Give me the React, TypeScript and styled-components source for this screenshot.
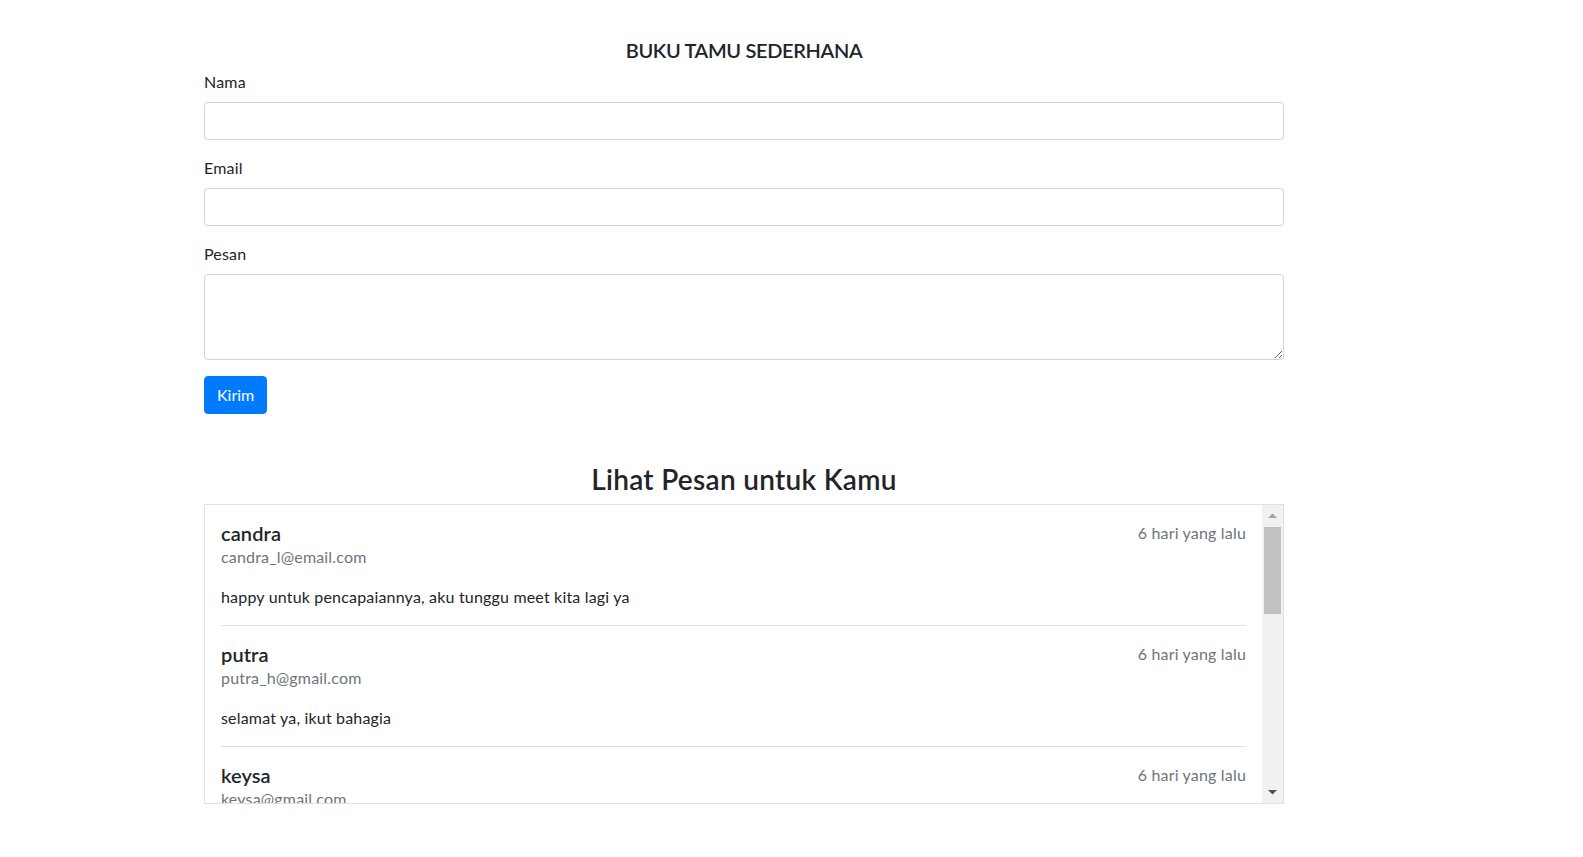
import React from "react";
import styled, { createGlobalStyle } from "styled-components";

const GlobalStyle = createGlobalStyle`
  * { box-sizing: border-box; }
  body {
    margin: 0;
    background: #fff;
    color: #212529;
    font-family: Lato, "Open Sans", "Noto Sans", sans-serif;
    font-size: 16px;
    line-height: 1.5;
    letter-spacing: 0.18px;
  }
`;

const Page = styled.div`
  width: 1080px;
  margin-left: 204px;
  padding-top: 38px;
`;

const Title = styled.h5`
  margin: 0 0 8px;
  font-size: 20px;
  font-weight: 600;
  line-height: 24px;
  text-align: center;
  letter-spacing: -0.35px;
`;

const Form = styled.form`
  display: flex;
  flex-direction: column;
  align-items: stretch;
`;

const Group = styled.div`
  display: flex;
  flex-direction: column;
  margin-bottom: 16px;
`;

const Label = styled.label`
  display: block;
  margin-bottom: 8px;
  line-height: 24px;
  font-size: 16px;
`;

const Input = styled.input`
  display: block;
  width: 100%;
  height: 38px;
  padding: 6px 12px;
  font: inherit;
  border: 1px solid #ced4da;
  border-radius: 4px;
  background: #fff;
  outline: none;
`;

const TextArea = styled.textarea`
  display: block;
  width: 100%;
  height: 86px;
  padding: 6px 12px;
  font: inherit;
  border: 1px solid #ced4da;
  border-radius: 4px;
  background: #fff;
  outline: none;
  resize: vertical;
`;

const Button = styled.button`
  align-self: flex-start;
  height: 38px;
  padding: 6px 12px;
  font: inherit;
  font-size: 16px;
  line-height: 24px;
  color: #fff;
  background: #007bff;
  border: 1px solid #007bff;
  border-radius: 4px;
  cursor: pointer;
`;

const Heading = styled.h3`
  margin: 49px 0 7px;
  font-size: 28px;
  font-weight: 600;
  line-height: 33.6px;
  text-align: center;
  letter-spacing: 0.3px;
`;

const ListBox = styled.div`
  display: flex;
  height: 300px;
  border: 1px solid #dee2e6;
`;

const ListContent = styled.div`
  flex: 1;
  min-width: 0;
  overflow: hidden;
  padding: 0 16px;
`;

const ScrollBar = styled.div`
  width: 21px;
  flex: none;
  display: flex;
  flex-direction: column;
  background: #f1f1f1;
`;

const ArrowButton = styled.div`
  height: 21px;
  flex: none;
  display: flex;
  align-items: center;
  justify-content: center;
`;

const Arrow = styled.svg<{ $dark?: boolean }>`
  width: 9px;
  height: 5px;
  fill: ${(p) => (p.$dark ? "#505050" : "#a3a3a3")};
`;

const Track = styled.div`
  flex: 1;
  padding: 1px 2px;
`;

const Thumb = styled.div`
  height: 87px;
  background: #c1c1c1;
`;

const Item = styled.div`
  padding: 16px 0 16px;
  border-bottom: 1px solid #dee2e6;
`;

const Row = styled.div`
  display: flex;
  justify-content: space-between;
  align-items: flex-start;
`;

const Name = styled.h5`
  margin: 0;
  font-size: 20px;
  font-weight: 600;
  line-height: 24px;
  letter-spacing: 0.1px;
`;

const Time = styled.span`
  color: #6c757d;
  font-size: 16px;
  line-height: 24px;
`;

const Email = styled.div`
  color: #6c757d;
  font-size: 16px;
  line-height: 24px;
  margin-bottom: 16px;
`;

const Message = styled.p`
  margin: 0;
  font-size: 16px;
  line-height: 24px;
`;

const messages = [
  { name: "candra", email: "candra_l@email.com", text: "happy untuk pencapaiannya, aku tunggu meet kita lagi ya" },
  { name: "putra", email: "putra_h@gmail.com", text: "selamat ya, ikut bahagia" },
  { name: "keysa", email: "keysa@gmail.com", text: "semoga sukses selalu ya" },
  { name: "rani", email: "rani_p@gmail.com", text: "selamat atas kelulusannya" },
  { name: "dimas", email: "dimas@email.com", text: "mantap, terus semangat!" },
  { name: "salsa", email: "salsa_a@gmail.com", text: "ikut senang dengarnya" },
  { name: "bima", email: "bima@gmail.com", text: "sukses terus kawan" },
];

export default function App() {
  return (
    <>
      <GlobalStyle />
      <Page>
        <Title>BUKU TAMU SEDERHANA</Title>
        <Form onSubmit={(e) => e.preventDefault()}>
          <Group>
            <Label htmlFor="nama">Nama</Label>
            <Input id="nama" type="text" />
          </Group>
          <Group>
            <Label htmlFor="email">Email</Label>
            <Input id="email" type="email" />
          </Group>
          <Group>
            <Label htmlFor="pesan">Pesan</Label>
            <TextArea id="pesan" rows={3} />
          </Group>
          <Button type="submit">Kirim</Button>
        </Form>
        <Heading>Lihat Pesan untuk Kamu</Heading>
        <ListBox>
          <ListContent>
            {messages.map((m) => (
              <Item key={m.name}>
                <Row>
                  <Name>{m.name}</Name>
                  <Time>6 hari yang lalu</Time>
                </Row>
                <Email>{m.email}</Email>
                <Message>{m.text}</Message>
              </Item>
            ))}
          </ListContent>
          <ScrollBar>
            <ArrowButton>
              <Arrow viewBox="0 0 9 5">
                <polygon points="0,5 9,5 4.5,0.5" />
              </Arrow>
            </ArrowButton>
            <Track>
              <Thumb />
            </Track>
            <ArrowButton>
              <Arrow $dark viewBox="0 0 9 5">
                <polygon points="0,0 9,0 4.5,4.5" />
              </Arrow>
            </ArrowButton>
          </ScrollBar>
        </ListBox>
      </Page>
    </>
  );
}
